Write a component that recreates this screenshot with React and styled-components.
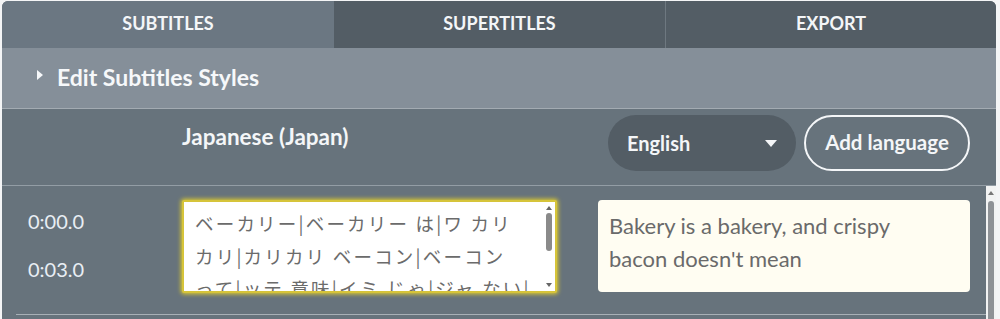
import React from "react";
import styled, { createGlobalStyle } from "styled-components";

const Global = createGlobalStyle`
  html, body { margin: 0; padding: 0; background: #f4f5f6; }
  body { font-family: Lato, "Noto Sans", sans-serif; overflow: hidden; }
  * { box-sizing: border-box; }
`;

const Panel = styled.div`
  margin: 1px 0 0 2px;
  width: 994px;
  height: 330px;
  border-radius: 6px 6px 0 0;
  overflow: hidden;
  background: #67737c;
  display: flex;
  flex-direction: column;
`;

const Tabs = styled.div`
  display: flex;
  height: 47px;
`;

const Tab = styled.div`
  flex: ${(p) => (p.$w ? `0 0 ${p.$w}px` : "1")};
  display: flex;
  align-items: center;
  justify-content: center;
  padding-bottom: 3px;
  background: ${(p) => (p.$active ? "#6b7782" : "#535d65")};
  border-left: ${(p) => (p.$divider ? "1px solid #6e7880" : "none")};
  color: #f4f6f8;
  font-weight: 700;
  font-size: 18px;
  text-transform: uppercase;
`;

const StylesBar = styled.div`
  height: 61px;
  background: #858f99;
  display: flex;
  align-items: center;
  padding-left: 35px;
  gap: 14px;
  border-bottom: 1px solid #a3abb2;
  color: #f6f8fa;
  font-weight: 700;
  font-size: 23px;
  padding-bottom: 2px;
`;

const Caret = styled.span`
  width: 0;
  height: 0;
  border-top: 5px solid transparent;
  border-bottom: 5px solid transparent;
  border-left: 6px solid #f6f8fa;
  margin-top: -5px;
`;

const Header = styled.div`
  height: 77px;
  display: flex;
  align-items: flex-start;
  border-bottom: 1px solid #939da5;
  background: #67737c;
`;

const LangTitle = styled.div`
  margin-left: 180px;
  margin-top: 14px;
  color: #f4f6f8;
  font-weight: 700;
  font-size: 22.5px;
  flex: 1;
`;

const Select = styled.div`
  margin-top: 6px;
  width: 188px;
  height: 56px;
  border-radius: 28px;
  background: #535d65;
  display: flex;
  align-items: center;
  justify-content: space-between;
  padding: 0 19px 0 19px;
  color: #f4f6f8;
  font-weight: 700;
  font-size: 20px;
`;

const DownTri = styled.span`
  width: 0;
  height: 0;
  border-left: 6px solid transparent;
  border-right: 6px solid transparent;
  border-top: 7px solid #f4f6f8;
`;

const OutlineButton = styled.button`
  margin: 6px 26px 0 8px;
  height: 56px;
  width: 166px;
  border-radius: 28px;
  border: 2px solid #f4f6f8;
  background: transparent;
  color: #f4f6f8;
  font-family: inherit;
  font-weight: 700;
  font-size: 20.5px;
  padding: 0 0 2px;
`;

const Body = styled.div`
  display: flex;
  flex: 1;
`;

const Rows = styled.div`
  flex: 1;
`;

const Row = styled.div`
  height: 129px;
  display: flex;
  align-items: flex-start;
  padding-top: 14px;
  border-bottom: 1px solid #a8b0b6;
  margin-left: 14px;
`;

const Times = styled.div`
  width: 166px;
  padding-left: 12px;
  display: flex;
  flex-direction: column;
  gap: 23px;
  padding-top: 9px;
  color: #e9eef4;
  font-size: 20px;
  line-height: 25px;
`;

const FocusBox = styled.div`
  width: 375px;
  height: 93px;
  display: flex;
  border: 2px solid #d6c43a;
  box-shadow: 0 0 4px 1px #e2cf2c;
  border-radius: 2px;
  background: #fff;
  overflow: hidden;
`;

const JpText = styled.div`
  flex: 1;
  padding: 5px 0 0 11px;
  color: #6b6b6b;
  font-family: "Noto Sans CJK JP", sans-serif;
  font-size: 18.5px;
  line-height: 32.5px;
  letter-spacing: 2.2px;
  white-space: nowrap;
  overflow: hidden;
`;

const JpLine = styled.div``;

const MiniScroll = styled.div`
  width: 12px;
  display: flex;
  flex-direction: column;
  align-items: center;
  padding: 4px 0 4px;
`;

const TinyUp = styled.span`
  width: 0;
  height: 0;
  border-left: 3px solid transparent;
  border-right: 3px solid transparent;
  border-bottom: 4px solid #666;
`;

const TinyDown = styled(TinyUp)`
  border-bottom: none;
  border-top: 4px solid #666;
  margin-top: auto;
`;

const MiniThumb = styled.div`
  width: 6px;
  height: 38px;
  margin-top: 3px;
  border-radius: 3px;
  background: #8a8a8a;
`;

const EnBox = styled.div`
  margin-left: 41px;
  width: 372px;
  height: 92px;
  background: #fffdf2;
  border-radius: 4px;
  padding: 9px 40px 9px 11px;
  color: #6a6a6a;
  font-size: 22px;
  line-height: 33px;
`;

const ScrollTrack = styled.div`
  width: 10px;
  background: #f2f3f3;
  display: flex;
  flex-direction: column;
  align-items: center;
  padding-top: 2px;
`;

const ArrowUp = styled.span`
  width: 0;
  height: 0;
  border-left: 3px solid transparent;
  border-right: 3px solid transparent;
  border-bottom: 4px solid #777;
  margin-top: 3px;
`;

const Thumb = styled.div`
  width: 6px;
  flex: 1;
  margin-top: 6px;
  border-radius: 3px;
  background: #8e9296;
`;

const jpLines = [
  "ベーカリー|ベーカリー は|ワ カリ",
  "カリ|カリカリ ベーコン|ベーコン",
  "って|ッテ 意味|イミ じゃ|ジャ ない|",
  "ナイ",
];

export default function App() {
  return (
    <>
      <Global />
      <Panel>
        <Tabs>
          <Tab $active $w={332}>Subtitles</Tab>
          <Tab $w={331}>Supertitles</Tab>
          <Tab $divider>Export</Tab>
        </Tabs>
        <StylesBar>
          <Caret />
          Edit Subtitles Styles
        </StylesBar>
        <Header>
          <LangTitle>Japanese (Japan)</LangTitle>
          <Select>
            English
            <DownTri />
          </Select>
          <OutlineButton>Add language</OutlineButton>
        </Header>
        <Body>
          <Rows>
            <Row>
              <Times>
                <span>0:00.0</span>
                <span>0:03.0</span>
              </Times>
              <FocusBox>
                <JpText>
                  {jpLines.map((l) => (
                    <JpLine key={l}>{l}</JpLine>
                  ))}
                </JpText>
                <MiniScroll>
                  <TinyUp />
                  <MiniThumb />
                  <TinyDown />
                </MiniScroll>
              </FocusBox>
              <EnBox>Bakery is a bakery, and crispy bacon doesn't mean</EnBox>
            </Row>
          </Rows>
          <ScrollTrack>
            <ArrowUp />
            <Thumb />
          </ScrollTrack>
        </Body>
      </Panel>
    </>
  );
}
